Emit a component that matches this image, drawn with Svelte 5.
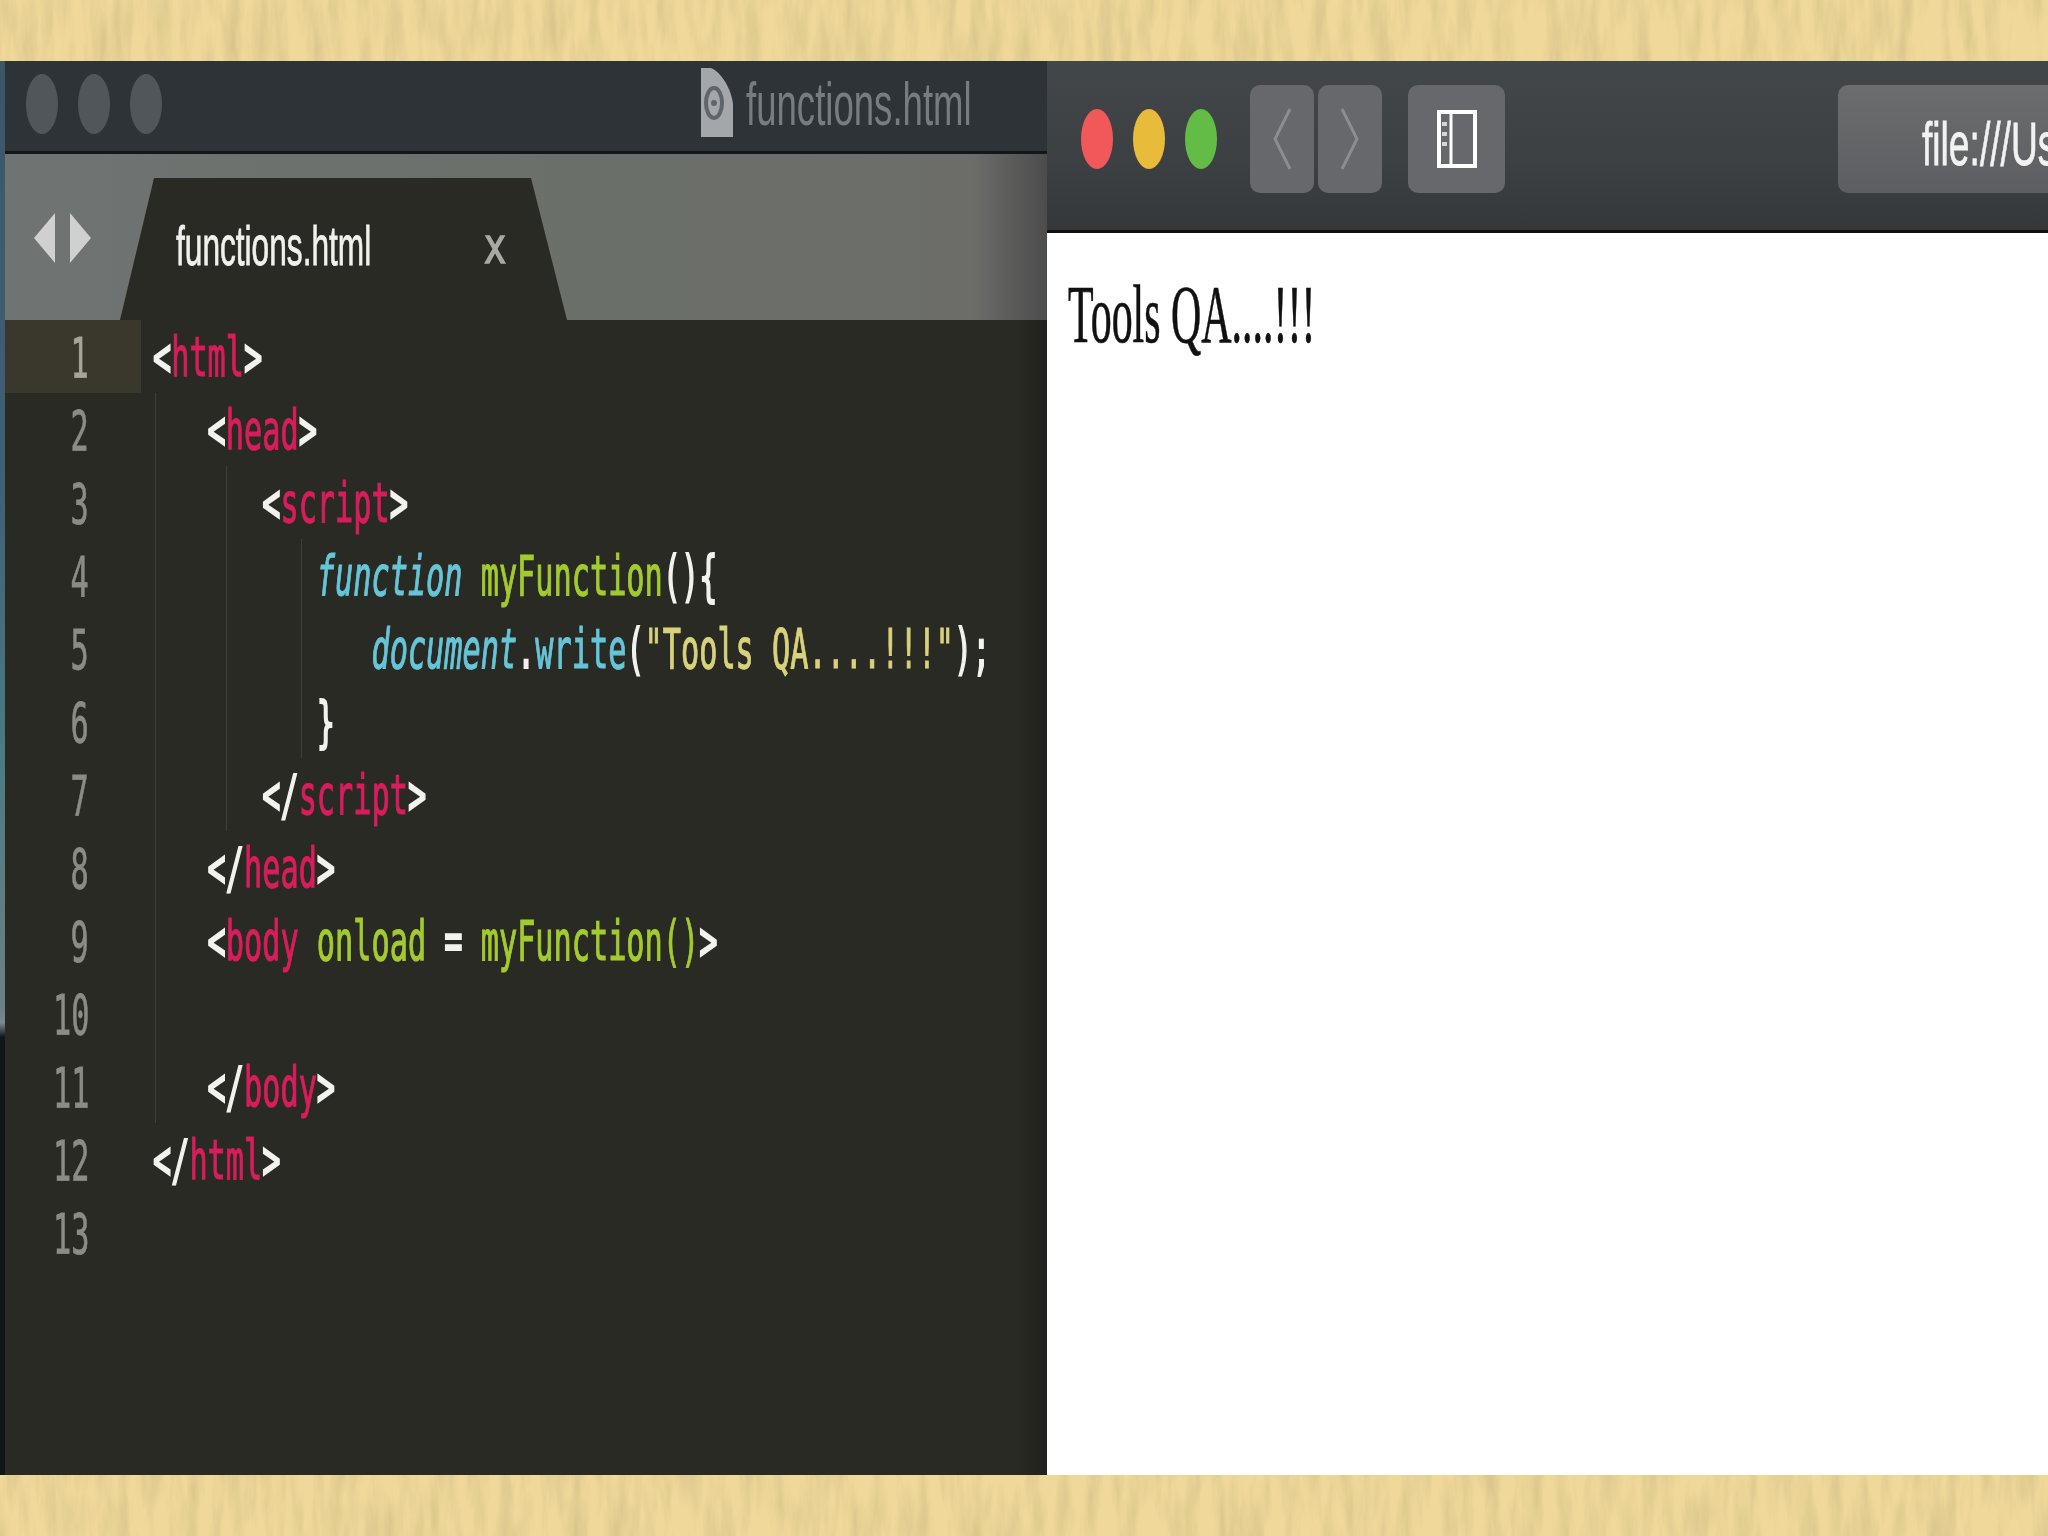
<script>
	const lines = [
		[['p', '<'], ['t', 'html'], ['p', '>']],
		[['p', '   <'], ['t', 'head'], ['p', '>']],
		[['p', '      <'], ['t', 'script'], ['p', '>']],
		[['p', '         '], ['k', 'function'], ['p', ' '], ['f', 'myFunction'], ['p', '(){']],
		[['p', '            '], ['k', 'document'], ['p', '.'], ['m', 'write'], ['p', '('], ['s', '"Tools QA....!!!"'], ['p', ');']],
		[['p', '         }']],
		[['p', '      </'], ['t', 'script'], ['p', '>']],
		[['p', '   </'], ['t', 'head'], ['p', '>']],
		[['p', '   <'], ['t', 'body'], ['p', ' '], ['f', 'onload'], ['p', ' = '], ['f', 'myFunction()'], ['p', '>']],
		[],
		[['p', '   </'], ['t', 'body'], ['p', '>']],
		[['p', '</'], ['t', 'html'], ['p', '>']],
		[]
	];
</script>

<div class="page">
	<svg class="wood" width="2048" height="1536">
		<filter id="grain" x="0" y="0" width="100%" height="100%">
			<feTurbulence type="fractalNoise" baseFrequency="0.07 0.012" numOctaves="4" seed="7" />
			<feColorMatrix
				type="matrix"
				values="0 0 0 0 0.66
				        0 0 0 0 0.52
				        0 0 0 0 0.24
				        1.5 0 0 0 -0.58"
			/>
		</filter>
		<rect width="2048" height="1536" filter="url(#grain)" />
	</svg>
	<div class="desk">
		<section class="editor">
			<header class="titlebar">
				<div class="dots">
					<i></i>
					<i></i>
					<i></i>
				</div>
				<div class="doc">
					<svg class="doc-icon" width="32" height="69" viewBox="0 0 32 69">
						<path d="M0 0H10C20 4 30 20 32 36V69H0Z" fill="#a3a7aa" />
						<ellipse cx="13" cy="35" rx="8" ry="15" fill="none" stroke="#5f6569" stroke-width="4" />
						<circle cx="13" cy="35" r="3" fill="#5f6569" />
					</svg>
					<span class="doc-name">functions.html</span>
				</div>
			</header>
			<div class="tabbar">
				<div class="arrows">
					<svg width="57" height="50" viewBox="0 0 57 50">
						<path d="M21 0V50L0 25Z" fill="#cfd0cf" />
						<path d="M36 0V50L57 25Z" fill="#cfd0cf" />
					</svg>
				</div>
				<div class="tab">
					<span class="tab-name">functions.html</span>
					<span class="tab-close">x</span>
				</div>
			</div>
			<div class="source">
				<div class="gutter">
					{#each lines as _, i}
						<div class="num" class:active={i === 0}><span>{i + 1}</span></div>
					{/each}
				</div>
				<pre class="code">{#each lines as line}<div class="line">{#each line as [kind, text]}<span class={kind}>{text}</span>{/each}</div>{/each}</pre>
				<b class="guide g1"></b>
				<b class="guide g2"></b>
				<b class="guide g3"></b>
			</div>
		</section>

		<section class="browser">
			<header class="toolbar">
				<div class="lights">
					<i class="red"></i>
					<i class="yellow"></i>
					<i class="green"></i>
				</div>
				<div class="nav">
					<div class="btn">
						<svg width="20" height="62" viewBox="0 0 20 62"><path d="M18 1L3 31L18 61" fill="none" stroke="#8b8d8f" stroke-width="3" /></svg>
					</div>
					<div class="btn">
						<svg width="20" height="62" viewBox="0 0 20 62"><path d="M2 1L17 31L2 61" fill="none" stroke="#8b8d8f" stroke-width="3" /></svg>
					</div>
				</div>
				<div class="btn side">
					<svg width="40" height="58" viewBox="0 0 40 58">
						<rect x="2" y="2" width="36" height="54" fill="none" stroke="#fff" stroke-width="4" />
						<path d="M14 2V56" stroke="#fff" stroke-width="3" />
						<path d="M5 14H10M5 24H10M5 34H10" stroke="#d5d5d5" stroke-width="4" />
					</svg>
				</div>
				<div class="url"><span>file:///Users</span></div>
			</header>
			<div class="content">
				<p>Tools QA....!!!</p>
			</div>
		</section>
	</div>
</div>

<style>
	:global(body) {
		margin: 0;
	}
	.page {
		position: relative;
		width: 2048px;
		height: 1536px;
		box-sizing: border-box;
		padding: 61px 0;
		overflow: hidden;
		background: #f0d89a;
	}
	.wood {
		position: absolute;
		top: 0;
		left: 0;
	}
	.desk {
		position: relative;
		display: flex;
		height: 100%;
	}
	.editor {
		width: 1047px;
		display: flex;
		flex-direction: column;
		overflow: hidden;
		box-sizing: border-box;
		border-left: 5px solid;
		border-image: linear-gradient(180deg, #3d5666 0, #3f6078 30%, #4f7a84 50%, #6c8084 67%, #7b8a8d 68%, #10151a 69%, #10151a 100%) 1;
		background: #2a2a24;
	}
	.titlebar {
		height: 93px;
		flex: none;
		box-sizing: border-box;
		display: flex;
		align-items: center;
		background: #2e3338;
		border-bottom: 3px solid #14171a;
		padding: 0 0 5px 21px;
	}
	.dots {
		display: flex;
		gap: 20px;
		width: 675px;
		flex: none;
	}
	.dots i {
		width: 32px;
		height: 60px;
		border-radius: 50%;
		background: #51565a;
	}
	.doc {
		display: flex;
		align-items: center;
		gap: 13px;
		height: 100%;
	}
	.doc-icon {
		margin-top: -2px;
	}
	.doc-name {
		font: 62px/1 "Liberation Sans", sans-serif;
		color: #777c7f;
		transform: scaleX(0.59);
		transform-origin: left center;
		white-space: nowrap;
		filter: blur(0.6px);
	}
	.tabbar {
		height: 166px;
		flex: none;
		display: flex;
		align-items: flex-end;
		background: linear-gradient(90deg, #6f7372 0, #6b6f69 60%, #6c6d69 93%, #4b4c4c 100%);
		padding-left: 29px;
	}
	.arrows {
		align-self: flex-start;
		margin-top: 59px;
		width: 86px;
		flex: none;
	}
	.arrows svg {
		display: block;
	}
	.tab {
		width: 447px;
		height: 142px;
		flex: none;
		box-sizing: border-box;
		padding: 40px 0 0 56px;
		display: flex;
		background: #2a2a24;
		clip-path: polygon(34px 0, 411px 0, 447px 100%, 0 100%);
		color: #f0f0ee;
	}
	.tab-name {
		width: 304px;
		font: 56px/1 "Liberation Sans", sans-serif;
		white-space: nowrap;
		transform: scaleX(0.565);
		transform-origin: left center;
		-webkit-text-stroke: 0.8px;
		filter: blur(0.4px);
	}
	.tab-close {
		font: 50px/1 "DejaVu Sans Mono", monospace;
		color: #a9a9a6;
		transform: scaleX(0.75);
		margin-top: 3px;
		-webkit-text-stroke: 1.5px;
	}
	.source {
		position: relative;
		flex: 1;
		display: flex;
		background: linear-gradient(90deg, #2a2a24 0, #2a2a24 97%, #21211d 100%);
	}
	.gutter {
		width: 136px;
		flex: none;
	}
	.num {
		height: 73px;
		box-sizing: border-box;
		padding-right: 52px;
		text-align: right;
		font: 56px/75px "DejaVu Sans Mono", monospace;
		color: #8b8c86;
		-webkit-text-stroke: 0.8px;
		filter: blur(0.5px);
	}
	.num span {
		display: inline-block;
		transform: scaleX(0.54);
		transform-origin: right center;
	}
	.num.active {
		background: #3a372c;
		color: #a5a59c;
	}
	.code {
		margin: 0 0 0 12px;
		font: 56px/74px "DejaVu Sans Mono", monospace;
		color: #f2f2ee;
		transform: scaleX(0.54);
		transform-origin: left top;
		-webkit-text-stroke: 1.2px;
		filter: blur(0.5px);
	}
	.line {
		height: 73px;
	}
	.p {
		-webkit-text-stroke: 2.2px;
	}
	.t {
		color: #d91d5c;
	}
	.k {
		color: #67c5d8;
		font-style: italic;
	}
	.f {
		color: #a2cb30;
	}
	.m {
		color: #67c5d8;
	}
	.s {
		color: #d8d27c;
	}
	.guide {
		position: absolute;
		width: 1px;
		background: #3e3e38;
	}
	.g1 {
		left: 150px;
		top: 73px;
		height: 730px;
	}
	.g2 {
		left: 221px;
		top: 146px;
		height: 365px;
	}
	.g3 {
		left: 296px;
		top: 219px;
		height: 219px;
	}
	.browser {
		flex: 1;
		min-width: 0;
		display: flex;
		flex-direction: column;
		background: #fff;
	}
	.toolbar {
		height: 172px;
		flex: none;
		box-sizing: border-box;
		display: flex;
		align-items: flex-start;
		padding: 24px 0 0 34px;
		background: linear-gradient(180deg, #42474a 0, #3d4043 60%, #35383a 100%);
		border-bottom: 3px solid #111;
		overflow: hidden;
	}
	.lights {
		display: flex;
		gap: 20px;
		margin: 24px 0 0;
		width: 169px;
		flex: none;
	}
	.lights i {
		width: 32px;
		height: 60px;
		border-radius: 50%;
	}
	.red {
		background: #f0585a;
	}
	.yellow {
		background: #e8bb3b;
	}
	.green {
		background: #62bc45;
	}
	.nav {
		display: flex;
		gap: 4px;
		margin-right: 26px;
	}
	.btn {
		width: 64px;
		height: 108px;
		border-radius: 10px;
		background: #66686b;
		display: flex;
		align-items: center;
		justify-content: center;
	}
	.side {
		width: 97px;
		margin-right: 333px;
	}
	.url {
		flex: 1;
		height: 108px;
		min-width: 0;
		border-radius: 10px 0 0 10px;
		background: linear-gradient(180deg, #6b6d6f, #5c5e61);
		padding-left: 84px;
		overflow: hidden;
		font: 62px/118px "Liberation Sans", sans-serif;
		color: #f2f2f2;
		white-space: nowrap;
	}
	.url span {
		display: inline-block;
		transform: scaleX(0.6);
		transform-origin: left center;
		-webkit-text-stroke: 0.8px;
		filter: blur(0.5px);
	}
	.content {
		flex: 1;
		padding: 40px 0 0 21px;
	}
	.content p {
		margin: 0;
		font: 83px/1 "Liberation Serif", serif;
		color: #111;
		white-space: nowrap;
		transform: scaleX(0.505);
		transform-origin: left center;
		-webkit-text-stroke: 0.7px;
		filter: blur(0.5px);
	}
</style>
